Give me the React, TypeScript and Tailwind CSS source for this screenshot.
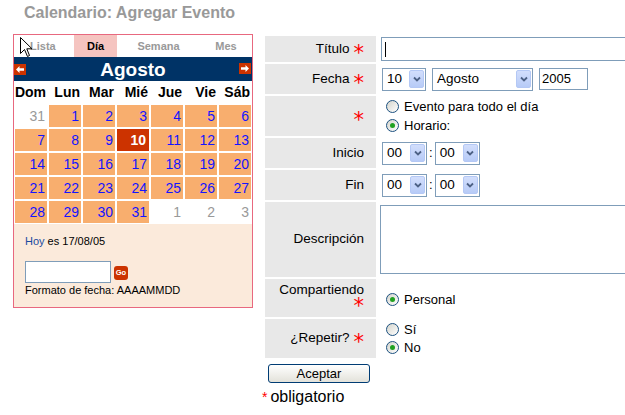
import React from "react";

const days = ["Dom", "Lun", "Mar", "Mié", "Jue", "Vie", "Sáb"];

// 5 rows of the month grid
const cells: { n: number; kind: "out" | "in" | "today" }[] = [
  { n: 31, kind: "out" },
  ...Array.from({ length: 31 }, (_, i) => ({
    n: i + 1,
    kind: (i + 1 === 10 ? "today" : "in") as "today" | "in",
  })),
  { n: 1, kind: "out" },
  { n: 2, kind: "out" },
  { n: 3, kind: "out" },
];

function Star() {
  return (
    <span className="relative top-[4px] ml-[4px] text-[21px] leading-none text-[#ff0000] [font-family:'DejaVu_Sans',sans-serif]">
      *
    </span>
  );
}

function Radio({ checked }: { checked?: boolean }) {
  return (
    <span className="flex h-[13px] w-[13px] shrink-0 items-center justify-center rounded-full border border-[#1c5180] bg-linear-to-br from-[#d4d4cc] to-white">
      {checked && <span className="h-[5px] w-[5px] rounded-full bg-[#21a121]" />}
    </span>
  );
}

function Chevron() {
  return (
    <svg width="8" height="6" viewBox="0 0 8 6">
      <path d="M1 1.5 L4 4.5 L7 1.5" fill="none" stroke="#4d6185" strokeWidth="1.8" />
    </svg>
  );
}

function Select({ value, className }: { value: string; className: string }) {
  return (
    <div className={`flex h-[23px] items-center border border-[#7f9db9] bg-white ${className}`}>
      <span className="flex-1 pl-[4px] text-[13.5px] leading-none">{value}</span>
      <span className="mr-[1px] flex h-[18px] w-[15px] items-center justify-center rounded-[2px] border border-[#b4c8f5] bg-linear-to-b from-[#d2defc] to-[#b7cbf7]">
        <Chevron />
      </span>
    </div>
  );
}

function Arrow({ dir }: { dir: "left" | "right" }) {
  return (
    <svg width="12" height="11" viewBox="0 0 12 11" className="bg-[#cc3300]">
      {dir === "left" ? (
        <path d="M2 5.5 L5.5 2 L5.5 4.2 L10 4.2 L10 6.8 L5.5 6.8 L5.5 9 Z" fill="#fff" />
      ) : (
        <path d="M10 5.5 L6.5 2 L6.5 4.2 L2 4.2 L2 6.8 L6.5 6.8 L6.5 9 Z" fill="#fff" />
      )}
    </svg>
  );
}

function Calendar() {
  return (
    <div className="w-[240px] border border-[#e8687f] bg-white">
      {/* tabs */}
      <div className="flex h-[22px] items-center text-[11px] font-bold text-[#999]">
        <div className="flex h-full w-[60px] items-center pl-[16px]">Lista</div>
        <div className="flex h-full w-[43px] items-center justify-center bg-[#f5c4c0] text-black">Día</div>
        <div className="flex h-full w-[83px] items-center justify-center">Semana</div>
        <div className="flex h-full flex-1 items-center justify-center">Mes</div>
      </div>
      {/* month bar */}
      <div className="relative flex h-[24px] items-center justify-center bg-[#003366]">
        <span className="absolute left-0 top-[7px] flex">
          <Arrow dir="left" />
        </span>
        <span className="text-[19px] font-bold leading-none text-white">Agosto</span>
        <span className="absolute right-[1px] top-[6px] flex">
          <Arrow dir="right" />
        </span>
      </div>
      {/* grid */}
      <div className="grid grid-cols-7 gap-[2px] px-[1px]">
        {days.map((d) => (
          <div key={d} className="flex h-[22px] items-center justify-end pr-[1px] text-[14px] font-bold">
            {d}
          </div>
        ))}
        {cells.map((c, i) => (
          <div
            key={i}
            className={
              c.kind === "today"
                ? "flex h-[22px] items-center justify-end bg-[#cc3300] pr-[3px] text-[14px] font-bold text-white"
                : c.kind === "in"
                ? "flex h-[22px] items-center justify-end bg-[#f8ae6e] pr-[2px] text-[14px] text-[#1414ff]"
                : "flex h-[22px] items-center justify-end pr-[2px] text-[14px] text-[#999]"
            }
          >
            {c.n}
          </div>
        ))}
      </div>
      {/* bottom */}
      <div className="mt-[1px] flex flex-col bg-[#fbeadb] pb-[10px] pl-[11px] pt-[11px] text-[11px] leading-[13px]">
        <div>
          <span className="text-[#1a4aa0]">Hoy</span> es 17/08/05
        </div>
        <div className="mt-[13px] flex items-center">
          <div className="h-[22px] w-[86px] border border-[#7f9db9] bg-white" />
          <span className="ml-[3px] mt-[1px] flex h-[14px] w-[14px] items-center justify-center rounded-[3px] bg-[#cc3300] text-[7.5px] font-bold leading-none text-white">
            Go
          </span>
        </div>
        <div className="mt-[1px]">Formato de fecha: AAAAMMDD</div>
      </div>
    </div>
  );
}

function Row({ h, label, star = true, children }: { h: string; label: React.ReactNode; star?: boolean; children?: React.ReactNode }) {
  return (
    <div className={`flex ${h}`}>
      <div className="flex w-[111px] shrink-0 items-center justify-end bg-[#e8e8e8] pr-[12px] text-[13.5px]">
        {label}
        {star && <Star />}
      </div>
      <div className="flex flex-1 items-center">{children}</div>
    </div>
  );
}

export default function App() {
  return (
    <div className="relative h-[415px] w-[625px] overflow-hidden bg-white text-black [font-family:'Liberation_Sans',Arial,sans-serif]">
      <div className="h-[34px] pl-[24px] pt-[3px] text-[16px] font-bold leading-[19px] text-[#999]">
        Calendario: Agregar Evento
      </div>
      <div className="flex items-start">
        <div className="ml-[13px]">
          <Calendar />
        </div>
        <div className="ml-[12px] mt-[2px] flex flex-1 flex-col">
          <div className="flex flex-col gap-[2px]">
            <Row h="h-[26px]" label="Título">
              <div className="ml-[5px] flex h-[24px] w-[260px] items-center border border-[#7f9db9] pl-[3px]">
                <span className="h-[15px] w-px bg-black" />
              </div>
            </Row>
            <Row h="h-[30px]" label="Fecha">
              <Select value="10" className="ml-[6px] w-[44px]" />
              <Select value="Agosto" className="ml-[6px] w-[101px]" />
              <div className="ml-[6px] flex h-[22px] w-[49px] items-center border border-[#7f9db9] pl-[2px] text-[13px]">
                2005
              </div>
            </Row>
            <Row h="h-[40px]" label="">
              <div className="ml-[10px] flex flex-col gap-[6px] text-[13px] leading-[13px]">
                <div className="flex items-center gap-[5px]">
                  <Radio />
                  <span>Evento para todo el día</span>
                </div>
                <div className="flex items-center gap-[5px]">
                  <Radio checked />
                  <span>Horario:</span>
                </div>
              </div>
            </Row>
            <Row h="h-[30px]" label="Inicio" star={false}>
              <Select value="00" className="ml-[6px] w-[45px]" />
              <span className="mx-[2px] text-[13px]">:</span>
              <Select value="00" className="w-[45px]" />
            </Row>
            <Row h="h-[30px]" label="Fin" star={false}>
              <Select value="00" className="ml-[6px] w-[45px]" />
              <span className="mx-[2px] text-[13px]">:</span>
              <Select value="00" className="w-[45px]" />
            </Row>
            <Row h="h-[75px]" label="Descripción" star={false}>
              <div className="ml-[4px] h-[69px] w-[260px] border border-[#7f9db9]" />
            </Row>
            <div className="flex h-[38px]">
              <div className="flex w-[111px] shrink-0 flex-col items-end bg-[#e8e8e8] pr-[12px] pt-[3px] text-[13.5px] leading-[16px]">
                <span>Compartiendo</span>
                <span className="ml-[4px] text-[21px] leading-[16px] text-[#ff0000] [font-family:'DejaVu_Sans',sans-serif]">
                  *
                </span>
              </div>
              <div className="ml-[10px] mt-[3px] flex flex-1 items-center gap-[5px] text-[13px]">
                <Radio checked />
                <span>Personal</span>
              </div>
            </div>
            <Row h="h-[39px]" label="¿Repetir?">
              <div className="ml-[10px] flex flex-col gap-[5px] text-[13px] leading-[13px]">
                <div className="flex items-center gap-[5px]">
                  <Radio />
                  <span>Sí</span>
                </div>
                <div className="flex items-center gap-[5px]">
                  <Radio checked />
                  <span>No</span>
                </div>
              </div>
            </Row>
          </div>
          <button className="ml-[3px] mt-[6px] flex h-[19px] w-[102px] items-center justify-center rounded-[3px] border border-[#003c74] bg-linear-to-b from-white to-[#e3e2da] text-[13px] leading-none">
            Aceptar
          </button>
          <div className="ml-[-3px] mt-[5px] flex items-start text-[16px] leading-[18px]">
            <span className="mr-[3px] text-[14px] text-[#ff0000]">*</span>
            <span>obligatorio</span>
          </div>
        </div>
      </div>
      {/* mouse pointer left in the screenshot */}
      <svg className="absolute left-[20px] top-[37px]" width="13" height="21" viewBox="0 0 13 21">
        <path d="M0.5 0.5 L0.5 16.5 L4.5 12.5 L7.5 19.5 L9.5 18.5 L6.8 11.8 L12 11.8 Z" fill="#fff" stroke="#000" strokeWidth="1" />
      </svg>
    </div>
  );
}
